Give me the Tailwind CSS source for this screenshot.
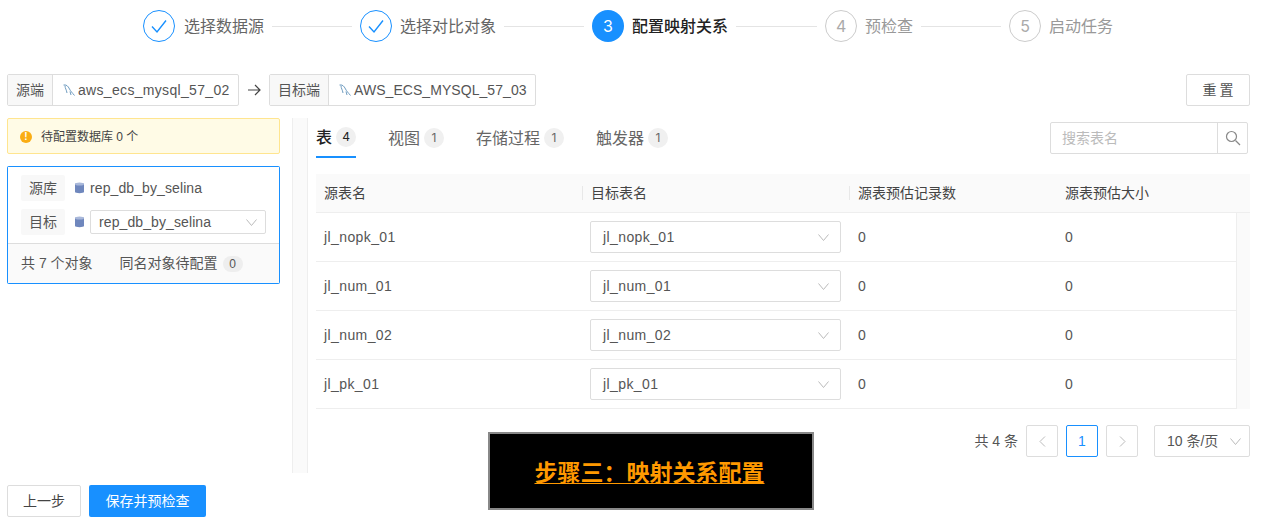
<!DOCTYPE html>
<html lang="zh-CN">
<head>
    <meta charset="UTF-8">
    <title>配置映射关系</title>
    <script src="https://cdn.jsdelivr.net/npm/@tailwindcss/browser@4"></script>
</head>
<body class="bg-white font-['Liberation_Sans','Noto_Sans_CJK_SC',sans-serif] text-[#555]">
<div class="relative w-[1268px] h-[524px] overflow-hidden">

    <!-- steps -->
    <div class="flex items-center h-[52px] pl-[143px] text-[16px] font-['Inter','Noto_Sans_CJK_SC',sans-serif]">
        <span class="w-8 h-8 rounded-full border border-[#1890ff] flex items-center justify-center">
            <svg class="w-[18px] h-[18px]" viewBox="0 0 18 18" fill="none" stroke="#1890ff" stroke-width="1.4"><path d="M2 9.500l5 5.500L16 3.500"/></svg>
        </span>
        <span class="ml-[9px] text-[#666]">选择数据源</span>
        <span class="w-20 h-px bg-[#e4e4e4] mx-2"></span>
        <span class="w-8 h-8 rounded-full border border-[#1890ff] flex items-center justify-center">
            <svg class="w-[18px] h-[18px]" viewBox="0 0 18 18" fill="none" stroke="#1890ff" stroke-width="1.4"><path d="M2 9.500l5 5.500L16 3.500"/></svg>
        </span>
        <span class="ml-2 text-[#666]">选择对比对象</span>
        <span class="w-20 h-px bg-[#e4e4e4] mx-2"></span>
        <span class="w-8 h-8 rounded-full bg-[#1890ff] text-white flex items-center justify-center">3</span>
        <span class="ml-2 text-[#222] font-medium">配置映射关系</span>
        <span class="w-[81px] h-px bg-[#e4e4e4] mx-2"></span>
        <span class="w-8 h-8 rounded-full border border-[#ccc] text-[#aaa] flex items-center justify-center">4</span>
        <span class="ml-2 text-[#999]">预检查</span>
        <span class="w-20 h-px bg-[#e4e4e4] mx-2"></span>
        <span class="w-8 h-8 rounded-full border border-[#ccc] text-[#aaa] flex items-center justify-center">5</span>
        <span class="ml-2 text-[#999]">启动任务</span>
    </div>

    <!-- source / target bar -->
    <div class="flex items-center h-8 mt-[22px] ml-[7px] mr-[18px] text-[14px]">
        <div class="flex h-8 border border-[#ddd] rounded-[2px]">
            <span class="w-[45px] bg-[#f8f8f8] border-r border-[#ddd] flex items-center justify-center">源端</span>
            <span class="w-[185px] flex items-center pl-[10px] gap-[3px] tracking-[0.32px]">
                <svg class="w-3 h-3 shrink-0" viewBox="0 0 12 12" fill="none" stroke="#6f9cc0" stroke-width="1"><path d="M.5 1C3.500.5 5 2 6.500 5c1 2 2.500 3.500 5 6.500M2 1.500C2 4.500 3.500 5.500 4 9M7 7.500l1 3.500"/></svg>
                aws_ecs_mysql_57_02
            </span>
        </div>
        <svg class="w-[14px] h-[14px] mx-2" viewBox="0 0 14 14" fill="none" stroke="#444" stroke-width="1.2"><path d="M1 7h12M8 2l5 5-5 5"/></svg>
        <div class="flex h-8 border border-[#ddd] rounded-[2px]">
            <span class="w-[59px] bg-[#f8f8f8] border-r border-[#ddd] flex items-center justify-center">目标端</span>
            <span class="w-[206px] flex items-center pl-[10px] gap-[3px] tracking-[0.06px]">
                <svg class="w-3 h-3 shrink-0" viewBox="0 0 12 12" fill="none" stroke="#6f9cc0" stroke-width="1"><path d="M.5 1C3.500.5 5 2 6.500 5c1 2 2.500 3.500 5 6.500M2 1.500C2 4.500 3.500 5.500 4 9M7 7.500l1 3.500"/></svg>
                AWS_ECS_MYSQL_57_03
            </span>
        </div>
        <button class="ml-auto w-16 h-8 pl-[3px] border border-[#ddd] rounded-[2px] tracking-[3px]">重置</button>
    </div>

    <div class="flex mt-3 ml-[7px]">
        <!-- left column -->
        <div class="w-[273px] shrink-0">
            <div class="h-9 flex items-center bg-[#fffbe6] border border-[#ffe58f] rounded-[2px] pl-3 pt-px text-[12px] gap-[9px] text-[#444]">
                <span class="w-3 h-3 rounded-full bg-[#faad14] text-white text-[10px] leading-3 text-center font-bold">!</span>
                待配置数据库 0 个
            </div>
            <div class="mt-3 h-[118px] bg-[#1890ff] p-px rounded-[2px] text-[14px]">
                <div class="h-[77px] bg-white pl-[13px] pr-3 pt-2 flex flex-col gap-2 border-b border-[#ddd]">
                    <div class="flex items-center h-[26px]">
                        <span class="w-11 h-[26px] bg-[#f8f8f8] flex items-center justify-center rounded-[2px]">源库</span>
                        <svg class="w-[9px] h-3 ml-[10px]" viewBox="0 0 9 12"><path d="M0 2C0 .5 9 .5 9 2v8c0 1.500-9 1.500-9 0z" fill="#6f87bd"/><ellipse cx="4.500" cy="2" rx="4.500" ry="1.500" fill="#a9b8da"/></svg>
                        <span class="ml-[6px] tracking-[0.1px]">rep_db_by_selina</span>
                    </div>
                    <div class="flex items-center h-[26px]">
                        <span class="w-11 h-[26px] bg-[#f8f8f8] flex items-center justify-center rounded-[2px]">目标</span>
                        <svg class="w-[9px] h-3 ml-[10px]" viewBox="0 0 9 12"><path d="M0 2C0 .5 9 .5 9 2v8c0 1.500-9 1.500-9 0z" fill="#6f87bd"/><ellipse cx="4.500" cy="2" rx="4.500" ry="1.500" fill="#a9b8da"/></svg>
                        <span class="ml-[6px] w-44 h-6 border border-[#ddd] rounded-[2px] flex items-center justify-between px-2 tracking-[0.1px]">
                            rep_db_by_selina
                            <svg class="w-[11px] h-[7px]" viewBox="0 0 11 7" fill="none" stroke="#bbb"><path d="M.5.500l5 6 5-6"/></svg>
                        </span>
                    </div>
                </div>
                <div class="h-[39px] flex items-center bg-[#fafafa] pl-[13px]">
                    共 7 个对象
                    <span class="ml-[27px]">同名对象待配置</span>
                    <span class="ml-[5px] w-5 h-4 rounded-full bg-[#eee] text-[12px] flex items-center justify-center">0</span>
                </div>
            </div>
        </div>

        <!-- splitter -->
        <div class="w-4 h-[355px] ml-3 bg-[#fafafa] border-x border-[#eee] shrink-0"></div>

        <!-- right column -->
        <div class="ml-2 w-[934px] shrink-0 relative">
            <div class="flex items-start h-[56px] text-[16px] text-[#666]">
                <div class="h-10 flex items-center gap-1 border-b-2 border-[#1890ff] text-[#222] font-medium font-['Inter','Noto_Sans_CJK_SC',sans-serif]">
                    表<span class="w-5 h-5 rounded-full bg-[#f0f0f0] text-[12px] font-normal flex items-center justify-center">4</span>
                </div>
                <div class="h-10 flex items-center gap-1 ml-8 font-['Inter','Noto_Sans_CJK_SC',sans-serif]">视图<span class="w-5 h-5 rounded-full bg-[#f0f0f0] text-[12px] flex items-center justify-center">1</span></div>
                <div class="h-10 flex items-center gap-1 ml-8 font-['Inter','Noto_Sans_CJK_SC',sans-serif]">存储过程<span class="w-5 h-5 rounded-full bg-[#f0f0f0] text-[12px] flex items-center justify-center">1</span></div>
                <div class="h-10 flex items-center gap-1 ml-8 font-['Inter','Noto_Sans_CJK_SC',sans-serif]">触发器<span class="w-5 h-5 rounded-full bg-[#f0f0f0] text-[12px] flex items-center justify-center">1</span></div>
                <div class="ml-auto mr-[2px] mt-1 flex h-8 w-[198px] border border-[#ddd] rounded-[2px] text-[14px]">
                    <span class="flex-1 flex items-center pl-[11px] text-[#bbb]">搜索表名</span>
                    <span class="w-[30px] border-l border-[#ddd] flex items-center justify-center">
                        <svg class="w-4 h-4" viewBox="0 0 16 16" fill="none" stroke="#888" stroke-width="1.200"><circle cx="6.500" cy="6.500" r="5"/><path d="M10.500 10.500L15 15"/></svg>
                    </span>
                </div>
            </div>

            <!-- table -->
            <div class="text-[14px] w-[934px]">
                <div class="grid grid-cols-[266px_267px_208px_193px] h-[39px] bg-[#fafafa] border-b border-[#eee] items-center text-[#444]">
                    <span class="pl-2">源表名</span>
                    <span class="pl-2 border-l border-[#e8e8e8] leading-[14px]">目标表名</span>
                    <span class="pl-2 border-l border-[#e8e8e8] leading-[14px]">源表预估记录数</span>
                    <span class="pl-2">源表预估大小</span>
                </div>
                <div class="relative tracking-[0.4px]">
                    <div class="absolute right-0 top-0 bottom-0 w-[14px] bg-[#fafafa] border-l border-[#eee]"></div>
                    <div class="grid grid-cols-[266px_267px_208px_193px] h-[49px] border-b border-[#eee] items-center">
                        <span class="pl-2">jl_nopk_01</span>
                        <span class="pl-2"><span class="w-[251px] h-8 border border-[#ddd] rounded-[2px] flex items-center justify-between pl-3 pr-[11px]">jl_nopk_01<svg class="w-[11px] h-[7px]" viewBox="0 0 11 7" fill="none" stroke="#bbb"><path d="M.5.500l5 6 5-6"/></svg></span></span>
                        <span class="pl-[9px]">0</span>
                        <span class="pl-2">0</span>
                    </div>
                    <div class="grid grid-cols-[266px_267px_208px_193px] h-[49px] border-b border-[#eee] items-center">
                        <span class="pl-2">jl_num_01</span>
                        <span class="pl-2"><span class="w-[251px] h-8 border border-[#ddd] rounded-[2px] flex items-center justify-between pl-3 pr-[11px]">jl_num_01<svg class="w-[11px] h-[7px]" viewBox="0 0 11 7" fill="none" stroke="#bbb"><path d="M.5.500l5 6 5-6"/></svg></span></span>
                        <span class="pl-[9px]">0</span>
                        <span class="pl-2">0</span>
                    </div>
                    <div class="grid grid-cols-[266px_267px_208px_193px] h-[49px] border-b border-[#eee] items-center">
                        <span class="pl-2">jl_num_02</span>
                        <span class="pl-2"><span class="w-[251px] h-8 border border-[#ddd] rounded-[2px] flex items-center justify-between pl-3 pr-[11px]">jl_num_02<svg class="w-[11px] h-[7px]" viewBox="0 0 11 7" fill="none" stroke="#bbb"><path d="M.5.500l5 6 5-6"/></svg></span></span>
                        <span class="pl-[9px]">0</span>
                        <span class="pl-2">0</span>
                    </div>
                    <div class="grid grid-cols-[266px_267px_208px_193px] h-[49px] border-b border-[#eee] items-center">
                        <span class="pl-2">jl_pk_01</span>
                        <span class="pl-2"><span class="w-[251px] h-8 border border-[#ddd] rounded-[2px] flex items-center justify-between pl-3 pr-[11px]">jl_pk_01<svg class="w-[11px] h-[7px]" viewBox="0 0 11 7" fill="none" stroke="#bbb"><path d="M.5.500l5 6 5-6"/></svg></span></span>
                        <span class="pl-[9px]">0</span>
                        <span class="pl-2">0</span>
                    </div>
                </div>
            </div>

            <!-- pagination -->
            <div class="flex justify-end items-center h-8 mt-4 text-[14px]">
                <span class="mr-2">共 4 条</span>
                <span class="w-8 h-8 border border-[#ddd] rounded-[2px] flex items-center justify-center">
                    <svg class="w-[7px] h-[11px]" viewBox="0 0 7 11" fill="none" stroke="#bbb"><path d="M6 .5L1 5.500l5 5"/></svg>
                </span>
                <span class="w-8 h-8 ml-2 border border-[#1890ff] text-[#1890ff] rounded-[2px] flex items-center justify-center">1</span>
                <span class="w-8 h-8 ml-2 border border-[#ddd] rounded-[2px] flex items-center justify-center">
                    <svg class="w-[7px] h-[11px]" viewBox="0 0 7 11" fill="none" stroke="#bbb"><path d="M1 .5l5 5-5 5"/></svg>
                </span>
                <span class="w-[96px] h-8 ml-4 border border-[#ddd] rounded-[2px] flex items-center justify-between pl-3 pr-2">
                    10 条/页
                    <svg class="w-[11px] h-[7px]" viewBox="0 0 11 7" fill="none" stroke="#bbb"><path d="M.5.500l5 6 5-6"/></svg>
                </span>
            </div>
        </div>
    </div>

    <!-- footer buttons -->
    <div class="absolute left-[7px] top-[485px] flex gap-2 text-[14px]">
        <button class="w-[74px] h-8 border border-[#ddd] rounded-[2px] text-[#444]">上一步</button>
        <button class="w-[117px] h-8 bg-[#1890ff] text-white rounded-[2px]">保存并预检查</button>
    </div>

    <!-- caption image laid over the page -->
    <div class="absolute left-[488px] top-[432px] w-[326px] h-[78px] bg-black border-2 border-[#888] flex items-center justify-center pr-[3px]">
        <span class="mt-[4px] text-[#ff9900] text-[23px] leading-[28px] font-bold underline underline-offset-2 decoration-1">步骤三：映射关系配置</span>
    </div>
</div>
</body>
</html>
